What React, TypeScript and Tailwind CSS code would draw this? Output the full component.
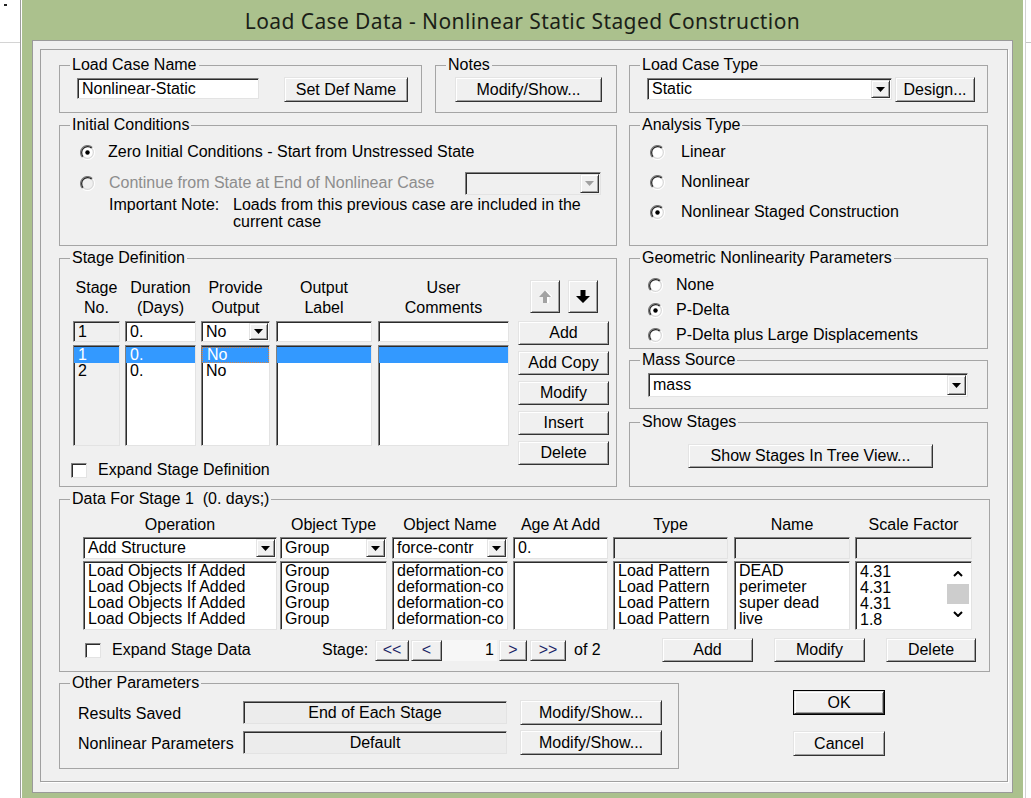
import React from 'react';

const raised =
  'bg-[#f0f0f0] border border-t-[#e4e4e4] border-l-[#e4e4e4] border-r-[#333] border-b-[#333] shadow-[inset_1px_1px_0_#fff,inset_-1px_-1px_0_#a0a0a0]';
const sunken =
  'border border-t-[#808080] border-l-[#808080] border-r-[#e3e3e3] border-b-[#e3e3e3] shadow-[inset_1px_1px_0_#2b2b2b]';

type Box = { className?: string; children?: React.ReactNode };

const Group = ({ title, className = '', children }: Box & { title: string }) => (
  <fieldset className={`shrink-0 border border-[#a5a5a5] ${className}`}>
    <legend className="ml-[10px] px-[2px] leading-[16px] whitespace-pre">{title}</legend>
    {children}
  </fieldset>
);

const Button = ({ label, className = '' }: { label: string; className?: string }) => (
  <button type="button" className={`flex shrink-0 items-center justify-center ${raised} ${className}`}>
    {label}
  </button>
);

const DropArrow = ({ className = '', disabled = false }: { className?: string; disabled?: boolean }) => (
  <span className={`flex shrink-0 items-center justify-center ${raised} ${className}`}>
    <svg width="9" height="5" viewBox="0 0 9 5">
      <path d="M0 0h9L4.5 5z" fill={disabled ? '#a0a0a0' : '#000'} />
    </svg>
  </span>
);

const Select = ({ value = '', className = '', disabled = false }: { value?: string; className?: string; disabled?: boolean }) => (
  <div className={`flex shrink-0 ${disabled ? 'bg-[#f0f0f0]' : 'bg-white'} ${sunken} ${className}`}>
    <span className="flex min-w-0 flex-1 items-center overflow-hidden whitespace-nowrap pl-[4px]">{value}</span>
    <DropArrow className="m-[1px] w-[19px]" disabled={disabled} />
  </div>
);

const Field = ({ value = '', className = '' }: { value?: string; className?: string }) => (
  <div className={`flex shrink-0 items-center overflow-hidden whitespace-nowrap pl-[4px] ${sunken} ${className}`}>
    {value}
  </div>
);

// classic 3D option button: dark arc top-left, light arc bottom-right
const Radio = ({ checked = false, disabled = false }: { checked?: boolean; disabled?: boolean }) => (
  <svg width="15" height="15" viewBox="0 0 15 15" className="shrink-0">
    <circle cx="7.5" cy="7.5" r="6.5" fill={disabled ? '#f0f0f0' : '#fff'} />
    <path d="M2.55 12.45A7 7 0 0 1 12.45 2.55" stroke="#7a7a7a" strokeWidth="1.2" fill="none" />
    <path d="M3.26 11.74A6 6 0 0 1 11.74 3.26" stroke="#222" strokeWidth="1.2" fill="none" />
    <path d="M12.45 2.55A7 7 0 0 1 2.55 12.45" stroke="#fff" strokeWidth="1.2" fill="none" />
    <path d="M11.74 3.26A6 6 0 0 1 3.26 11.74" stroke="#d8d8d8" strokeWidth="1.2" fill="none" />
    {checked && <circle cx="7.5" cy="7.5" r="2.2" fill="#000" />}
  </svg>
);

const Checkbox = () => <span className={`h-[15px] w-[16px] shrink-0 bg-white ${sunken}`} />;

const RadioRow = ({ label, checked, gap, className = '' }: { label: string; checked?: boolean; gap: string; className?: string }) => (
  <div className={`flex h-[20px] items-center ${className}`}>
    <Radio checked={checked} />
    <span className={gap}>{label}</span>
  </div>
);

// list box column; first row is the current selection
const List = ({
  rows,
  className = '',
  selected = false,
  focusFirst = false,
}: {
  rows: string[];
  className?: string;
  selected?: boolean;
  focusFirst?: boolean;
}) => (
  <div className={`flex flex-col overflow-hidden ${sunken} ${className}`}>
    <div className="h-[1px] shrink-0" />
    {rows.map((r, i) => (
      <div
        key={i}
        className={`h-[16px] shrink-0 overflow-hidden whitespace-nowrap pl-[4px] ${
          selected && i === 0 ? 'bg-[#3399ff] text-white' : ''
        } ${focusFirst && i === 0 ? 'border border-dotted border-[#d0844a] pl-[3px] leading-[14px]' : ''}`}
      >
        {r}
      </div>
    ))}
  </div>
);

const ArrowButton = ({ up }: { up?: boolean }) => (
  <span className={`flex h-[33px] w-[30px] shrink-0 items-center justify-center ${raised}`}>
    <svg width="14" height="13" viewBox="0 0 14 13">
      {up ? (
        <>
          <path d="M6 13h4v-6h4l-7-7-7 7h4z" fill="#fff" transform="translate(1 0)" />
          <path d="M5 13h4v-6h4l-6-6.5-6 6.5h4z" fill="#a3a3a3" />
        </>
      ) : (
        <path d="M4.5 0h5v6h4.5l-7 7-7-7h4.5z" fill="#000" />
      )}
    </svg>
  </span>
);

const NavButton = ({ label, className }: { label: string; className: string }) => (
  <span className={`flex h-[21px] shrink-0 items-center justify-center text-[#1b2566] ${raised} ${className}`}>{label}</span>
);

const dataRows = {
  op: ['Load Objects If Added', 'Load Objects If Added', 'Load Objects If Added', 'Load Objects If Added'],
  type: ['Group', 'Group', 'Group', 'Group'],
  name: ['deformation-co', 'deformation-co', 'deformation-co', 'deformation-co'],
  pattern: ['Load Pattern', 'Load Pattern', 'Load Pattern', 'Load Pattern'],
  load: ['DEAD', 'perimeter', 'super dead', 'live'],
  scale: ['4.31', '4.31', '4.31', '1.8'],
};

const stageCols = [
  { head: ['Stage', 'No.'], w: 'w-[47px]', ml: '', rows: ['1', '2'] },
  { head: ['Duration', '(Days)'], w: 'w-[71px]', ml: 'ml-[5px]', rows: ['0.', '0.'] },
  { head: ['Provide', 'Output'], w: 'w-[69px]', ml: 'ml-[5px]', rows: ['No', 'No'] },
  { head: ['Output', 'Label'], w: 'w-[96px]', ml: 'ml-[6px]', rows: ['', ''] },
  { head: ['User', 'Comments'], w: 'w-[131px]', ml: 'ml-[6px]', rows: ['', ''] },
];

const Head = ({ children, className = '' }: Box) => (
  <div className={`flex h-[20px] items-center justify-center whitespace-nowrap ${className}`}>{children}</div>
);

export default function App() {
  return (
    <div className="flex h-[798px] w-[1031px] overflow-hidden bg-white font-['Liberation_Sans',Arial,sans-serif] text-[16px] leading-[16px] text-black">
      {/* window behind, left edge */}
      <div className="w-[22px] shrink-0">
        <div className="h-full w-[21px] border-r border-[#9d9d9d]">
          <div className="h-[43px] border-b border-[#d4d4d4] pl-[4px] pt-[4px]">
            <div className="h-[2px] w-[3px] bg-[#222]" />
          </div>
        </div>
      </div>

      {/* dialog window */}
      <div className="flex w-[1001px] shrink-0 flex-col bg-[#abc18d] px-[10px]">
        <div className="flex h-[40px] shrink-0 items-center justify-center pt-[3px] font-['Noto_Sans',sans-serif] text-[21px] leading-[21px] tracking-[0.4px] text-[#1b1f18]">
          Load Case Data - Nonlinear Static Staged Construction
        </div>

        <div className="h-[753px] shrink-0 border border-[#9a9a9a] bg-[#f0f0f0] pl-[7px] pt-[8px]">
          <div className="h-[733px] w-[968px] border border-[#a0a0a0] pl-[18px] pt-[7px] shadow-[1px_1px_0_#fff]">
            <div className="flex">
              {/* left column */}
              <div className="flex w-[558px] flex-col">
                <div className="flex">
                  <Group title="Load Case Name" className="h-[56px] w-[363px]">
                    <div className="flex items-start pl-[17px]">
                      <Field value="Nonlinear-Static" className="mt-[5px] h-[21px] w-[182px] bg-white" />
                      <Button label="Set Def Name" className="ml-[25px] mt-[4px] h-[25px] w-[124px]" />
                    </div>
                  </Group>
                  <Group title="Notes" className="ml-[13px] h-[56px] w-[182px]">
                    <div className="pl-[19px]">
                      <Button label="Modify/Show..." className="mt-[4px] h-[25px] w-[147px]" />
                    </div>
                  </Group>
                </div>

                <Group title="Initial Conditions" className="mt-[4px] h-[129px] w-[558px]">
                  <div className="pl-[20px]">
                    <RadioRow
                      label="Zero Initial Conditions - Start from Unstressed State"
                      checked
                      gap="ml-[13px]"
                      className="mt-[9px]"
                    />
                    <div className="mt-[10px] flex h-[22px] items-center">
                      <Radio disabled />
                      <span className="ml-[14px] w-[356px] text-[#8d8d8d]">Continue from State at End of Nonlinear Case</span>
                      <Select disabled className="h-[23px] w-[136px]" />
                    </div>
                    <div className="ml-[29px] mt-[2px] flex leading-[17px]">
                      <span className="w-[124px] shrink-0">Important Note:</span>
                      <span className="flex flex-col">
                        <span>Loads from this previous case are included in the</span>
                        <span>current case</span>
                      </span>
                    </div>
                  </div>
                </Group>

                <Group title="Stage Definition" className="mt-[4px] h-[237px] w-[558px]">
                  <div className="flex pl-[11px] pt-[12px]">
                    <div className="flex flex-col">
                      <div className="ml-[2px] flex">
                        {stageCols.map((c, i) => (
                          <div key={c.head[0]} className={`flex flex-col ${c.w} ${c.ml}`}>
                            <div className="flex h-[40px] flex-col items-center justify-center leading-[20px]">
                              <span>{c.head[0]}</span>
                              <span>{c.head[1]}</span>
                            </div>
                            {i === 2 ? (
                              <Select value="No" className="mt-[3px] h-[21px]" />
                            ) : (
                              <Field
                                value={i === 0 ? '1' : i === 1 ? '0.' : ''}
                                className={`mt-[3px] h-[21px] ${i === 0 ? 'bg-[#f0f0f0]' : 'bg-white'}`}
                              />
                            )}
                            <List
                              rows={c.rows}
                              selected
                              focusFirst={i === 2}
                              className={`mt-[3px] h-[101px] ${i === 0 ? 'bg-[#f0f0f0]' : 'bg-white'}`}
                            />
                          </div>
                        ))}
                      </div>
                      <div className="mt-[16px] flex items-center">
                        <Checkbox />
                        <span className="ml-[11px]">Expand Stage Definition</span>
                      </div>
                    </div>

                    <div className="ml-[9px] flex w-[91px] flex-col pt-[2px]">
                      <div className="flex">
                        <span className="ml-[12px]">
                          <ArrowButton up />
                        </span>
                        <span className="ml-[8px]">
                          <ArrowButton />
                        </span>
                      </div>
                      <div className="mt-[8px] flex flex-col gap-[6px]">
                        {['Add', 'Add Copy', 'Modify', 'Insert', 'Delete'].map((b) => (
                          <Button key={b} label={b} className="h-[24px] w-[91px]" />
                        ))}
                      </div>
                    </div>
                  </div>
                </Group>
              </div>

              {/* right column */}
              <div className="ml-[12px] flex w-[359px] flex-col">
                <Group title="Load Case Type" className="h-[56px] w-[359px]">
                  <div className="flex items-start pl-[17px]">
                    <Select value="Static" className="mt-[5px] h-[22px] w-[245px]" />
                    <Button label="Design..." className="ml-[3px] mt-[4px] h-[25px] w-[80px]" />
                  </div>
                </Group>

                <Group title="Analysis Type" className="mt-[4px] h-[129px] w-[359px]">
                  <div className="pl-[20px]">
                    <RadioRow label="Linear" gap="ml-[16px]" className="mt-[9px]" />
                    <RadioRow label="Nonlinear" gap="ml-[16px]" className="mt-[10px]" />
                    <RadioRow label="Nonlinear Staged Construction" checked gap="ml-[16px]" className="mt-[10px]" />
                  </div>
                </Group>

                <Group title="Geometric Nonlinearity Parameters" className="mt-[4px] h-[99px] w-[359px]">
                  <div className="pl-[18px]">
                    <RadioRow label="None" gap="ml-[13px]" className="mt-[9px]" />
                    <RadioRow label="P-Delta" checked gap="ml-[13px]" className="mt-[5px]" />
                    <RadioRow label="P-Delta plus Large Displacements" gap="ml-[13px]" className="mt-[5px]" />
                  </div>
                </Group>

                <Group title="Mass Source" className="mt-[3px] h-[57px] w-[359px]">
                  <div className="pl-[18px]">
                    <Select value="mass" className="mt-[5px] h-[24px] w-[320px]" />
                  </div>
                </Group>

                <Group title="Show Stages" className="mt-[5px] h-[73px] w-[359px]">
                  <div className="pl-[58px]">
                    <Button label="Show Stages In Tree View..." className="mt-[14px] h-[24px] w-[245px]" />
                  </div>
                </Group>
              </div>
            </div>

            <Group title="Data For Stage 1  (0. days;)" className="mt-[4px] h-[181px] w-[931px]">
              <div className="pl-[23px] pt-[8px]">
                <div className="flex">
                  <div className="flex w-[194px] flex-col">
                    <Head>Operation</Head>
                    <Select value="Add Structure" className="mt-[2px] h-[22px]" />
                    <List rows={dataRows.op} className="mt-[2px] h-[69px] bg-white" />
                  </div>
                  <div className="ml-[3px] flex w-[107px] flex-col">
                    <Head>Object Type</Head>
                    <Select value="Group" className="mt-[2px] h-[22px]" />
                    <List rows={dataRows.type} className="mt-[2px] h-[69px] bg-white" />
                  </div>
                  <div className="ml-[5px] flex w-[116px] flex-col">
                    <Head>Object Name</Head>
                    <Select value="force-contr" className="mt-[2px] h-[22px]" />
                    <List rows={dataRows.name} className="mt-[2px] h-[69px] bg-white" />
                  </div>
                  <div className="ml-[5px] flex w-[95px] flex-col">
                    <Head>Age At Add</Head>
                    <Field value="0." className="mt-[2px] h-[22px] bg-white" />
                    <List rows={[]} className="mt-[2px] h-[69px] bg-white" />
                  </div>
                  <div className="ml-[5px] flex w-[115px] flex-col">
                    <Head>Type</Head>
                    <Field className="mt-[2px] h-[22px] bg-[#f0f0f0]" />
                    <List rows={dataRows.pattern} className="mt-[2px] h-[69px] bg-white" />
                  </div>
                  <div className="ml-[6px] flex w-[116px] flex-col">
                    <Head>Name</Head>
                    <Field className="mt-[2px] h-[22px] bg-[#f0f0f0]" />
                    <List rows={dataRows.load} className="mt-[2px] h-[69px] bg-white" />
                  </div>
                  <div className="ml-[5px] flex w-[117px] flex-col">
                    <Head>Scale Factor</Head>
                    <Field className="mt-[2px] h-[22px] bg-[#f0f0f0]" />
                    <div className={`mt-[2px] flex h-[69px] bg-white ${sunken}`}>
                      <List rows={dataRows.scale} className="flex-1 border-0 pt-[1px] shadow-none" />
                      {/* scrollbar */}
                      <div className="mr-[2px] flex w-[22px] flex-col items-center pt-[9px]">
                        <svg width="10" height="6" viewBox="0 0 10 6">
                          <path d="M1 5l4-4 4 4" stroke="#000" strokeWidth="2" fill="none" />
                        </svg>
                        <div className="mt-[7px] h-[20px] w-[22px] bg-[#cdcdcd]" />
                        <svg width="10" height="6" viewBox="0 0 10 6" className="mt-[7px]">
                          <path d="M1 1l4 4 4-4" stroke="#000" strokeWidth="2" fill="none" />
                        </svg>
                      </div>
                    </div>
                  </div>
                </div>

                <div className="mt-[8px] flex h-[24px] items-center">
                  <div className="ml-[2px] flex w-[237px] items-center">
                    <Checkbox />
                    <span className="ml-[11px]">Expand Stage Data</span>
                  </div>
                  <span className="w-[53px]">Stage:</span>
                  <NavButton label="<<" className="w-[34px]" />
                  <NavButton label="<" className="ml-[2px] w-[31px]" />
                  <span className="flex h-[21px] w-[55px] items-center justify-end bg-[#f7f7f7] pr-[3px]">1</span>
                  <NavButton label=">" className="ml-[2px] w-[28px]" />
                  <NavButton label=">>" className="ml-[3px] w-[36px]" />
                  <span className="ml-[8px] w-[88px]">of 2</span>
                  <Button label="Add" className="h-[24px] w-[91px]" />
                  <Button label="Modify" className="ml-[21px] h-[24px] w-[91px]" />
                  <Button label="Delete" className="ml-[21px] h-[24px] w-[90px]" />
                </div>
              </div>
            </Group>

            <div className="mt-[3px] flex">
              <Group title="Other Parameters" className="h-[94px] w-[620px]">
                <div className="pl-[18px]">
                  {[
                    ['Results Saved', 'End of Each Stage'],
                    ['Nonlinear Parameters', 'Default'],
                  ].map(([label, value], i) => (
                    <div key={label} className={`flex h-[25px] items-center ${i === 0 ? 'mt-[9px]' : 'mt-[5px]'}`}>
                      <span className="w-[165px] shrink-0 pt-[2px]">{label}</span>
                      <div className={`flex h-[23px] w-[264px] shrink-0 justify-center bg-[#ececec] pt-[3px] ${sunken}`}>
                        {value}
                      </div>
                      <Button label="Modify/Show..." className="ml-[13px] h-[25px] w-[142px]" />
                    </div>
                  ))}
                </div>
              </Group>

              <div className="ml-[114px] flex w-[92px] flex-col">
                <div className="mt-[15px] border border-black">
                  <Button label="OK" className="h-[23px] w-[90px]" />
                </div>
                <Button label="Cancel" className="mt-[16px] h-[25px] w-[92px]" />
              </div>
            </div>
          </div>
        </div>
      </div>

      {/* window behind, right edge */}
      <div className="w-[8px] shrink-0">
        <div className="ml-[2px] h-full border-l border-[#d2d2d2]">
          <div className="h-[43px] border-b border-[#c4c4c4]" />
        </div>
      </div>
    </div>
  );
}
